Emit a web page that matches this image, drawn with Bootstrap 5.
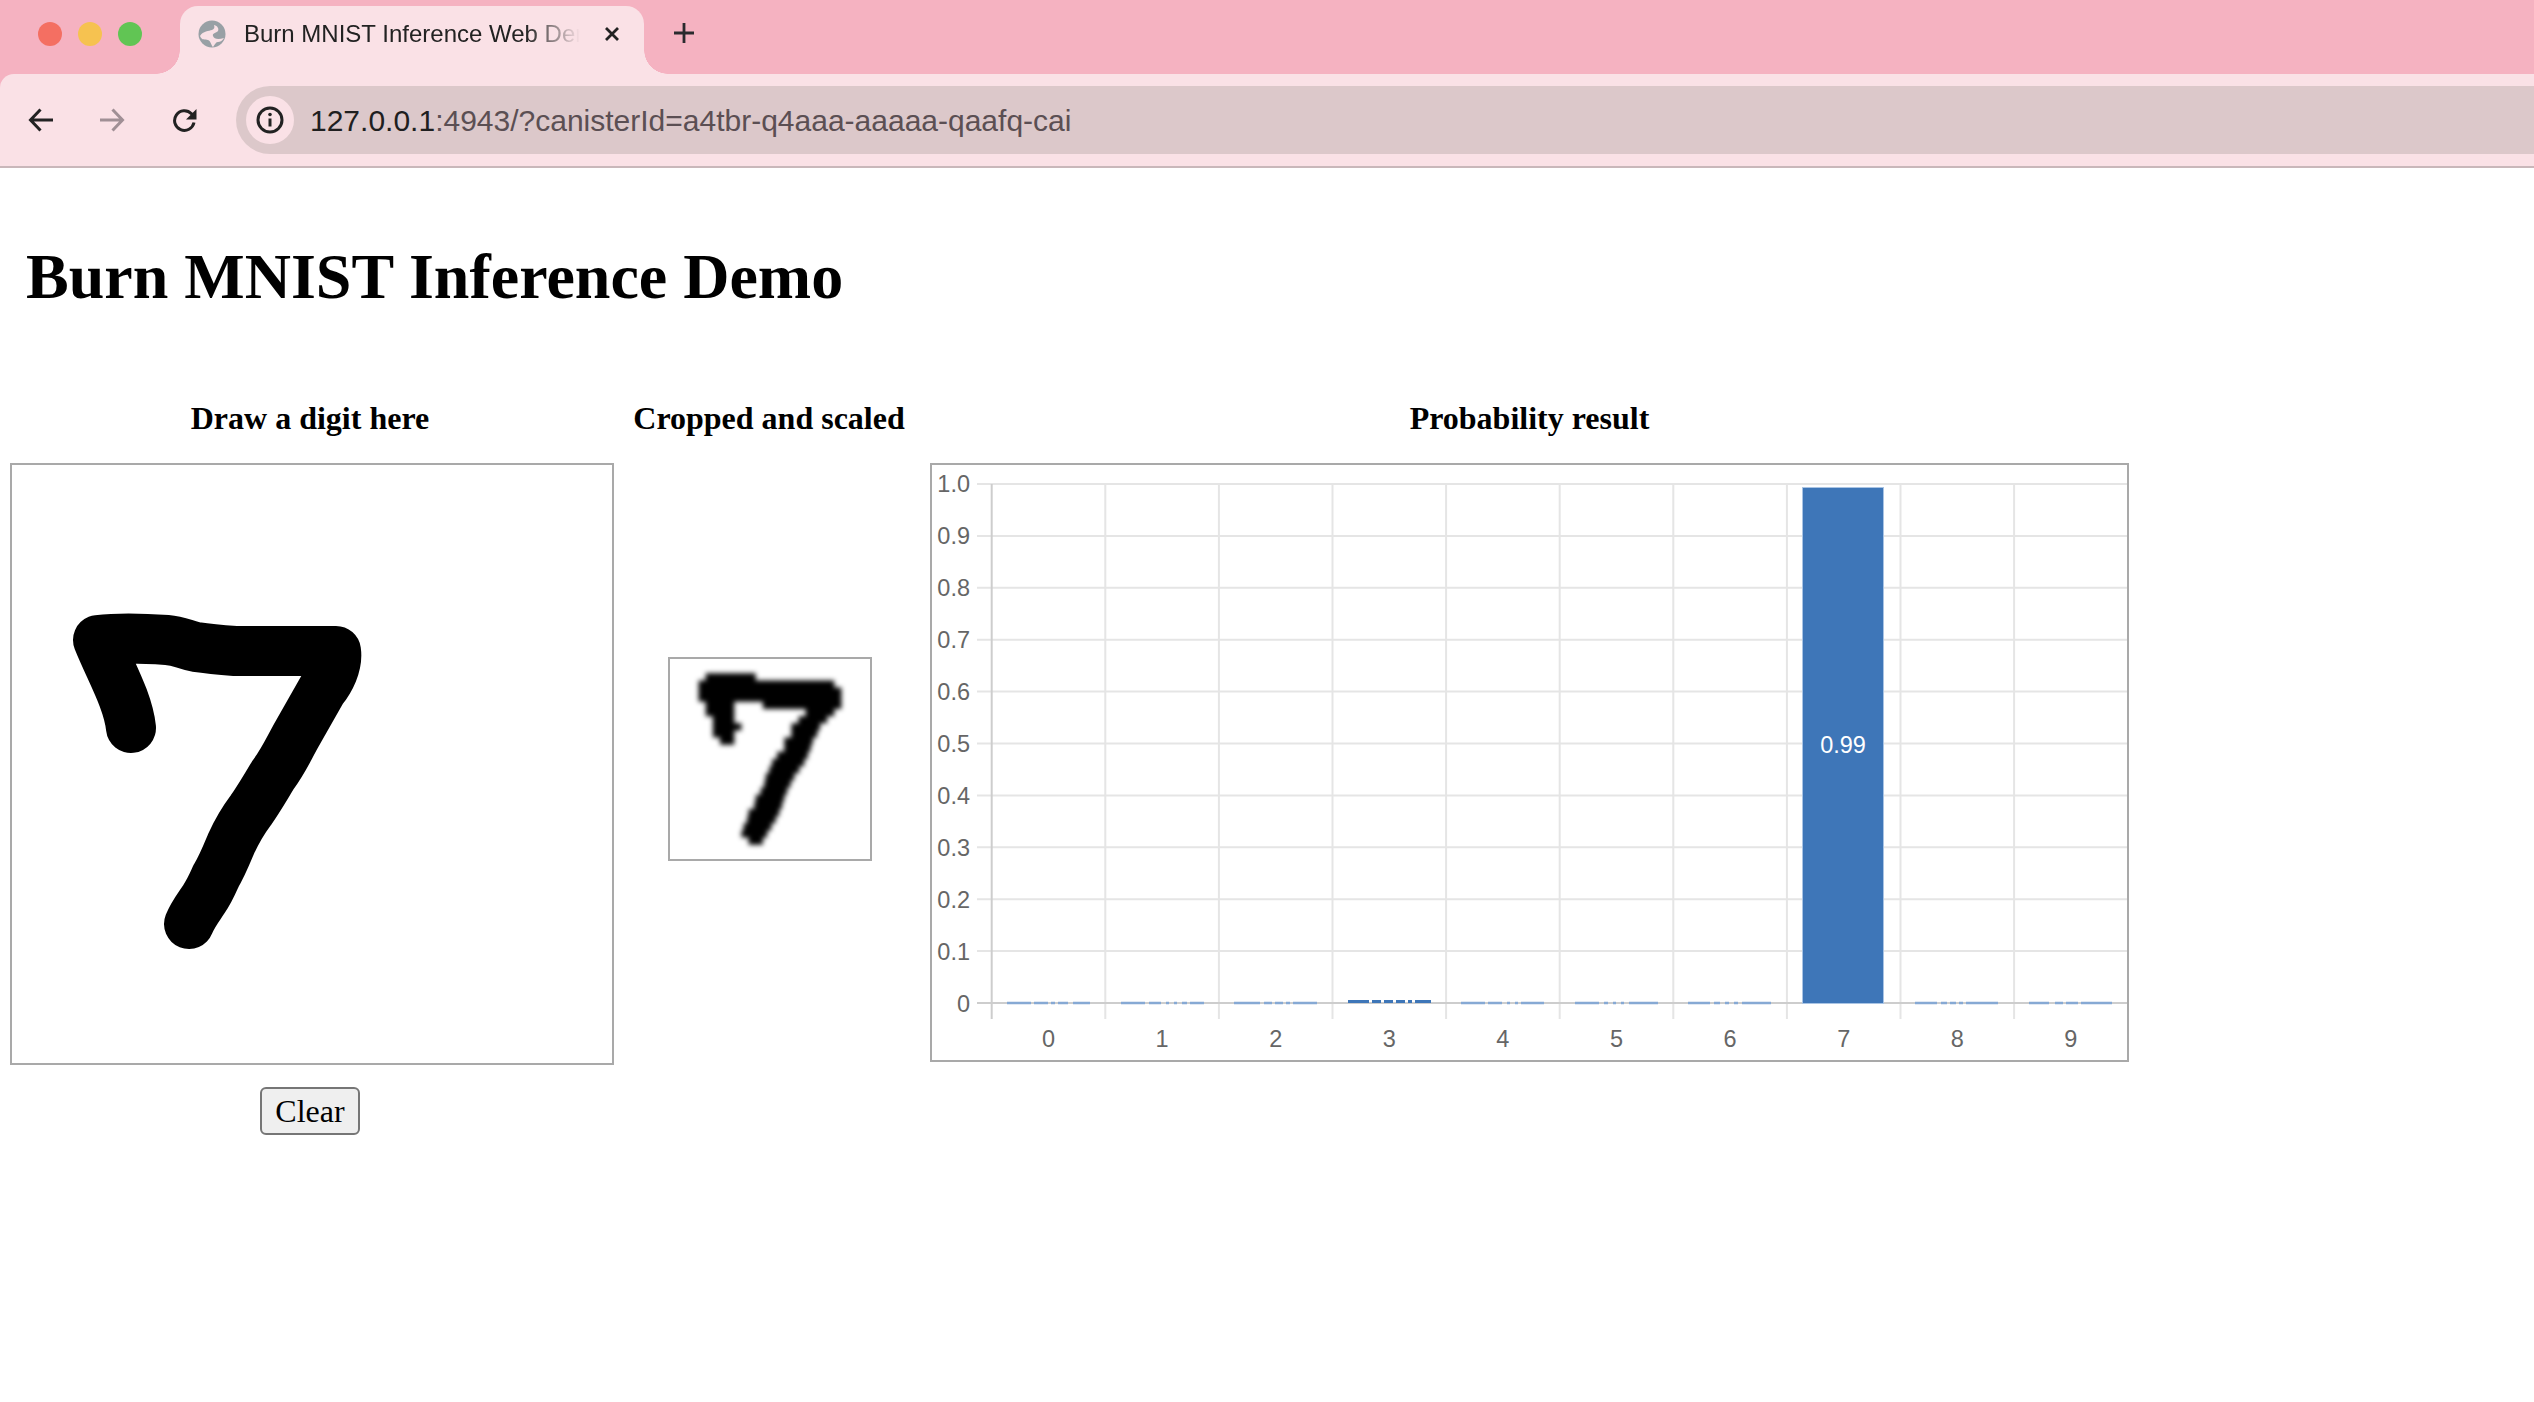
<!DOCTYPE html>
<html lang="en">
<head>
<meta charset="utf-8">
<title>Burn MNIST Inference Web Demo</title>
<link href="https://cdn.jsdelivr.net/npm/bootstrap@5.3.0/dist/css/bootstrap.min.css" rel="stylesheet">
<style>
html,body{background:#fff;color:#000;overflow:hidden}
body{font-family:"Liberation Serif","Times New Roman",serif;height:1402px}
.chrome-ui{font-family:"Liberation Sans",Arial,sans-serif}
.tabstrip{height:74px;background:#f5b2c1}
.tl-dots{padding-left:38px;gap:16px;width:180px;height:70px;padding-bottom:2px}
.tl-dot{width:24px;height:24px;border-radius:50%}
.tl-red{background:#f46f62}.tl-yellow{background:#f6c250}.tl-green{background:#61c554}
.tabshape{width:464px;height:68px;margin-top:6px;background:#fae1e6;border-radius:18px 18px 0 0;position:relative;padding:0 24px 12px 18px;gap:18px;color:#222}
.tabshape::before,.tabshape::after{content:"";position:absolute;bottom:0;width:24px;height:24px}
.tabshape::before{left:-24px;background:radial-gradient(circle at 0 0,transparent 23.5px,#fae1e6 24px)}
.tabshape::after{right:-24px;background:radial-gradient(circle at 100% 0,transparent 23.5px,#fae1e6 24px)}
.tabtitle{font-size:24px;width:336px;white-space:nowrap;overflow:hidden;line-height:32px;-webkit-mask-image:linear-gradient(90deg,#000 84%,transparent 100%);mask-image:linear-gradient(90deg,#000 84%,transparent 100%)}
.tabclose{margin-left:6px}
.tabplus{margin:0 0 8px 30px}
.toolstrip{height:94px;background:#fae1e6;border-bottom:2px solid #c9b7ba;border-top-left-radius:14px;margin-top:0}
.chromewrap{background:#f5b2c1}
.toolicons{width:236px;padding-left:28px;flex:none}
.tool-forward{margin-left:47px}.tool-reload{margin-left:47px}
.addrbar{flex:1;height:68px;background:#dcc8ca;border-radius:34px 0 0 34px;padding-left:10px;gap:16px;font-size:30px;color:#5b4f53;white-space:nowrap}
.infobubble{width:48px;height:48px;border-radius:50%;background:#fae1e6}
.addrhost{color:#1f1f1f}
.demotitle{font-size:64px;font-weight:700;line-height:76px;margin:71px 0 83px 26px}
.demohead{font-size:32px;font-weight:700;line-height:40px;margin-bottom:25px;white-space:nowrap}
.demo-col-draw{width:604px;margin-left:10px}
.demo-col-draw .demohead{padding-right:4px}
.demo-col-crop{width:272px;margin-left:19px}
.demo-col-chart{width:1199px;margin-left:25px}
.drawbox{width:604px;height:602px;border:2px solid #a9a9a9;display:block}
.cropbox{width:204px;height:204px;border:2px solid #a9a9a9;margin-top:219px;margin-left:35px;display:block}
.chartbox{width:1199px;height:599px;border:2px solid #a9a9a9;display:block}
.clearwrap{padding-right:4px;margin-top:22px}
.clearbtn{width:100px;height:48px;padding:0;font-size:32px;line-height:1;font-family:"Liberation Serif","Times New Roman",serif;background:#efefef;border:2px solid #767676;border-radius:6px;color:#000}
.chartbox text{font-family:"Liberation Sans",Arial,sans-serif;font-size:23.5px;fill:#666}
.chartbox .grid{stroke:#e5e5e5;stroke-width:2;fill:none}
.chartbox .axis{stroke:#cdcdcd;stroke-width:2;fill:none}
.chartbox .tiny{stroke:#86a9d4;stroke-width:2.5;fill:none}
.chartbox .tinyhi{stroke:#3e76b8;stroke-width:3;fill:none}
</style>
</head>
<body>
<div class="chromewrap chrome-ui">
  <div class="tabstrip d-flex align-items-start">
    <div class="tl-dots d-flex align-items-center">
      <span class="tl-dot tl-red"></span><span class="tl-dot tl-yellow"></span><span class="tl-dot tl-green"></span>
    </div>
    <div class="tabshape d-flex align-items-center">
      <svg width="28" height="28" viewBox="0 0 28 28" class="flex-shrink-0"><circle cx="14" cy="14" r="13.5" fill="#98a0a5"/><path d="M2 16C5 11 11 11 14 10C16 9 17 8 16 5C20 6 21 9 20 11C18 13 14 13 15 16C16 19 20 20 26 18C24 21 22 22 20 22C18 22 17 24 15 27C13 25 13 21 10 20C7 19 4 21 2 16z" fill="#fae1e6"/></svg>
      <span class="tabtitle">Burn MNIST Inference Web Demo</span>
      <svg class="tabclose flex-shrink-0" width="16" height="16" viewBox="0 0 16 16"><path d="M2 2l12 12M14 2L2 14" stroke="#222" stroke-width="2.8" fill="none"/></svg>
    </div>
    <svg class="tabplus align-self-center flex-shrink-0" width="20" height="20" viewBox="0 0 20 20"><path d="M10 0v20M0 10h20" stroke="#2a2a2e" stroke-width="2.8" fill="none"/></svg>
  </div>
  <div class="toolstrip d-flex align-items-center">
    <div class="toolicons d-flex align-items-center">
      <svg width="25" height="24" viewBox="0 0 25 24"><path d="M25 12H3M12.5 1.500L2.500 12l10 10.500" stroke="#222" stroke-width="3" fill="none"/></svg>
      <svg class="tool-forward" width="25" height="24" viewBox="0 0 25 24"><path d="M0 12h22M12.500 1.500L22.500 12l-10 10.500" stroke="#a08f95" stroke-width="3" fill="none"/></svg>
      <svg class="tool-reload" width="25" height="25" viewBox="0 0 25 25"><path d="M22 14.500a9.800 9.800 0 1 1-2.600-8.800L23 9" stroke="#222" stroke-width="3" fill="none"/><path d="M24.500 1v10.500h-10.500z" fill="#222"/></svg>
    </div>
    <div class="addrbar d-flex align-items-center">
      <span class="infobubble d-flex align-items-center justify-content-center flex-shrink-0">
        <svg width="28" height="28" viewBox="0 0 28 28"><circle cx="14" cy="14" r="12" stroke="#222" stroke-width="3" fill="none"/><path d="M14 12.500v8" stroke="#222" stroke-width="3"/><circle cx="14" cy="8.500" r="1.800" fill="#222"/></svg>
      </span>
      <span><span class="addrhost">127.0.0.1</span>:4943/?canisterId=a4tbr-q4aaa-aaaaa-qaafq-cai</span>
    </div>
  </div>
</div>

<h1 class="demotitle">Burn MNIST Inference Demo</h1>

<div class="d-flex align-items-start">
  <div class="demo-col-draw">
    <div class="demohead text-center">Draw a digit here</div>
    <svg class="drawbox" viewBox="12 465 600 598">
      <path d="M131 728C128 700 110 670 98 640C115 638 140 638 167 640C180 641 185 645 196 647C210 649 222 650 235 651L336 651C338 665 330 680 322 690L297 734C288 750 284 760 273 775C265 788 260 797 251 810C242 822 236 833 231 844C226 856 222 866 216 876C212 885 210 890 204 899C198 908 193 914 189 924" fill="none" stroke="#000" stroke-width="50" stroke-linecap="round" stroke-linejoin="round"/>
    </svg>
    <div class="clearwrap text-center"><button type="button" class="btn clearbtn">Clear</button></div>
  </div>

  <div class="demo-col-crop">
    <div class="demohead text-center">Cropped and scaled</div>
    <svg class="cropbox" viewBox="0 0 28 28">
      <defs><filter id="softpx" x="-10%" y="-10%" width="120%" height="120%"><feGaussianBlur stdDeviation="0.38"/></filter></defs>
      <path filter="url(#softpx)" fill="#000" d="M5 2h7v1H5zM4 3h19v1H4zM4 4h20v2H4zM5 6h4v1H5zM13 6h11v1H13zM5 7h4v1H5zM19 7h4v1h-4zM6 8h3v1H6zM18 8h4v1h-4zM6 9h4v1H6zM17 9h4v1h-4zM6 10h3v1H6zM17 10h3.600v1H17zM7 11h2v1H7zM16 11h4v1h-4zM16 12h3.700v1H16zM15 13h4.300v1H15zM14.300 14h4.500v1H14.300zM13.900 15h4.200v1H13.900zM13.400 16h4v1H13.400zM13.200 17h3.700v1H13.200zM12.700 18h3.700v1H12.700zM12 19h4v1H12zM11.800 20h3.900v1H11.800zM11 21h4.300v1H11zM10.800 22h4v1H10.800zM10.300 23h3.900v1H10.300zM10 24h3.600v1H10zM11 25h2v1H11z"/>
    </svg>
  </div>

  <div class="demo-col-chart">
    <div class="demohead text-center">Probability result</div>
    <svg class="chartbox" viewBox="932 465 1195 595">
      <g class="grid">
        <path d="M977 484H2127M977 535.900H2127M977 587.800H2127M977 639.700H2127M977 691.600H2127M977 743.500H2127M977 795.400H2127M977 847.300H2127M977 899.200H2127M977 951.100H2127"/>
        <path d="M1105.300 484V1019M1218.900 484V1019M1332.500 484V1019M1446.100 484V1019M1559.700 484V1019M1673.300 484V1019M1786.900 484V1019M1900.500 484V1019M2014.100 484V1019"/>
      </g>
      <g class="axis"><path d="M991.700 484V1019M977 1003H2127"/></g>
      <g class="tiny">
        <path d="M1007 1003h83" stroke-dasharray="24 3 14 3 4 3 10 5 20"/>
        <path d="M1121 1003h83" stroke-dasharray="24 4 12 5 3 5 3 5 5 3 19"/>
        <path d="M1234 1003h83" stroke-dasharray="26 4 8 3 8 3 4 3 24"/>
        <path d="M1461 1003h83" stroke-dasharray="24 3 14 5 3 5 3 3 23"/>
        <path d="M1575 1003h83" stroke-dasharray="24 5 4 5 3 5 3 5 29"/>
        <path d="M1688 1003h83" stroke-dasharray="22 4 6 5 4 5 4 4 29"/>
        <path d="M1915 1003h83" stroke-dasharray="22 4 6 3 6 3 4 3 32"/>
        <path d="M2029 1003h83" stroke-dasharray="20 6 8 3 12 3 51"/>
      </g>
      <path class="tinyhi" d="M1348 1001.500h83" stroke-dasharray="21 3 9 3 9 3 9 3 4 3 16"/>
      <rect x="1802.500" y="487.500" width="81" height="516" fill="#3e76b8" stroke="#a9c4e4" stroke-width="1"/>
      <text x="1843" y="753" text-anchor="middle" style="fill:#fff">0.99</text>
      <g text-anchor="end">
        <text x="970" y="492">1.0</text><text x="970" y="544">0.9</text><text x="970" y="596">0.8</text><text x="970" y="648">0.7</text><text x="970" y="700">0.6</text><text x="970" y="752">0.5</text><text x="970" y="804">0.4</text><text x="970" y="856">0.3</text><text x="970" y="908">0.2</text><text x="970" y="960">0.1</text><text x="970" y="1012">0</text>
      </g>
      <g text-anchor="middle">
        <text x="1048.500" y="1047">0</text><text x="1162" y="1047">1</text><text x="1275.700" y="1047">2</text><text x="1389.300" y="1047">3</text><text x="1502.900" y="1047">4</text><text x="1616.500" y="1047">5</text><text x="1730.100" y="1047">6</text><text x="1843.700" y="1047">7</text><text x="1957.300" y="1047">8</text><text x="2070.900" y="1047">9</text>
      </g>
    </svg>
  </div>
</div>
<script src="https://cdn.jsdelivr.net/npm/bootstrap@5.3.0/dist/js/bootstrap.bundle.min.js"></script>
</body>
</html>
